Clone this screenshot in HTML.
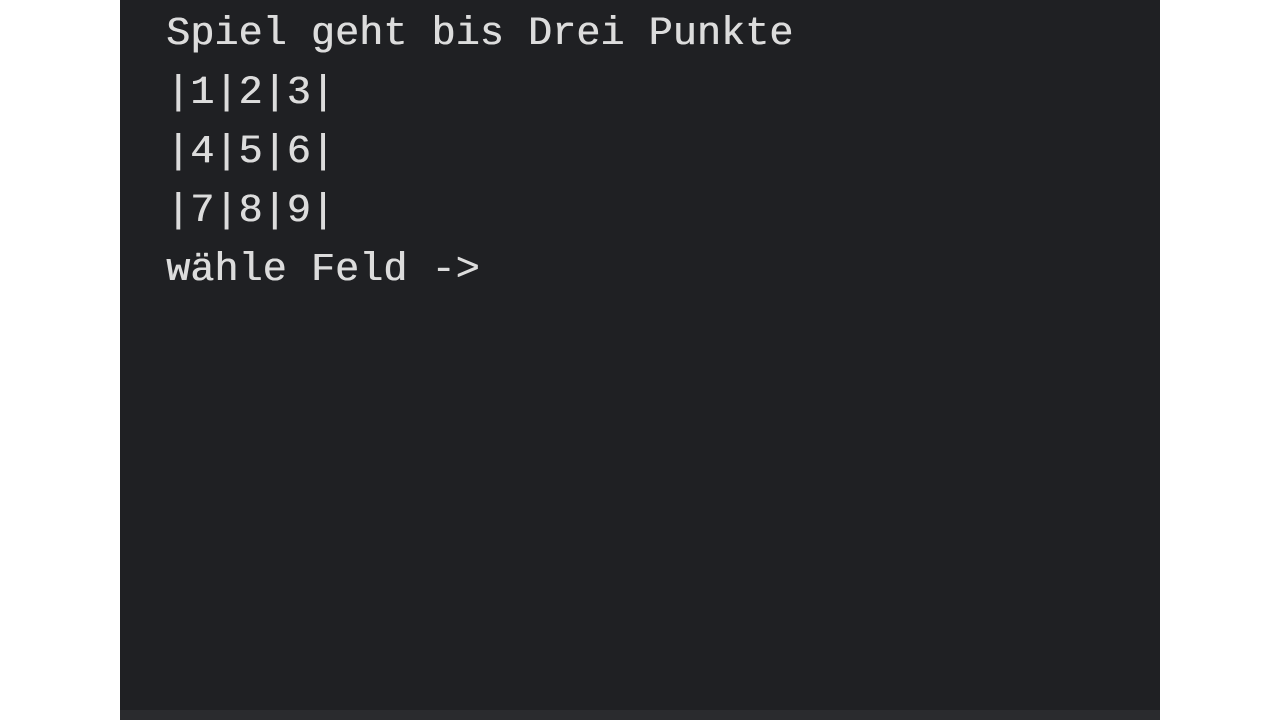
<!DOCTYPE html>
<html><head><meta charset="utf-8"><style>
html,body{margin:0;padding:0;width:1280px;height:720px;background:#fff;overflow:hidden}
.p{position:absolute;left:120px;top:0;width:1040px;height:720px;background:#1f2023}
.b{position:absolute;left:0;bottom:0;width:1040px;height:10px;background:#2a2b2e}
pre{position:absolute;left:46px;top:5px;margin:0;font-family:"Liberation Mono",monospace;font-size:40px;line-height:59px;letter-spacing:0.12px;color:#dcdcdc;text-shadow:0.6px 0 0 #dcdcdc}
</style></head><body>
<div class="p"><pre>Spiel geht bis Drei Punkte
|1|2|3|
|4|5|6|
|7|8|9|
wähle Feld -&gt;</pre><div class="b"></div></div>
</body></html>
